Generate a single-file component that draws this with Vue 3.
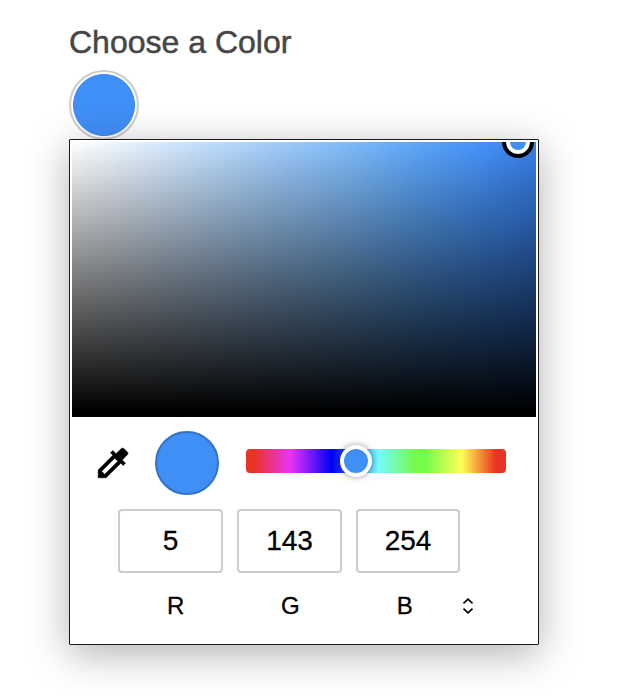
<script setup>
import { ref } from 'vue'

const channels = ref([
  { name: 'R', value: 5 },
  { name: 'G', value: 143 },
  { name: 'B', value: 254 },
])
</script>

<template>
  <main class="page">
    <div class="label">Choose a Color</div>
    <div class="swatch"></div>
    <section class="picker">
      <div class="field">
        <div class="field-thumb"></div>
      </div>
      <div class="controls">
        <svg class="dropper" viewBox="0 0 24 24">
          <path d="M20.900 5.700L18.300 3.100 17.200 3.100 13.840 6.410 11.910 4.500 10.500 5.910 11.920 7.330 3.100 16.150V20.900H7.850L16.670 12.080 18.090 13.500 19.500 12.090 17.580 10.170 20.900 6.800zM7 18.800L5.200 17 13.060 9.120 14.880 10.940z" />
        </svg>
        <div class="preview"></div>
        <div class="hue">
          <div class="hue-thumb"></div>
        </div>
      </div>
      <div class="inputs">
        <div v-for="c in channels" :key="c.name" class="input">{{ c.value }}</div>
      </div>
      <div class="names">
        <span v-for="c in channels" :key="c.name" class="name">{{ c.name }}</span>
        <svg class="arrows" viewBox="0 0 12 18">
          <path d="M1.500 6.300L6 2.200l4.500 4.100M1.500 11.700L6 15.800l4.500-4.100" />
        </svg>
      </div>
    </section>
  </main>
</template>

<style>
body {
  background: #fff;
}
</style>

<style scoped>
.page {
  box-sizing: border-box;
  width: 618px;
  height: 696px;
  padding: 24px 0 0 69px;
  overflow: hidden;
  font-family: "Liberation Sans", Arial, sans-serif;
}
.label {
  height: 46px;
  line-height: 36px;
  font-size: 32px;
  color: #464646;
  -webkit-text-stroke: 0.5px #464646;
  white-space: nowrap;
}
.swatch {
  box-sizing: border-box;
  width: 70px;
  height: 70px;
  border: 2px solid #ccc;
  border-radius: 50%;
  background: radial-gradient(circle, #408ff7 30.600px, #fff 31.400px);
}
.picker {
  position: relative;
  box-sizing: border-box;
  width: 470px;
  height: 506px;
  margin-top: -1px;
  padding: 2px;
  border: 1px solid #1c1c1e;
  border-radius: 1px;
  background: #fff;
  box-shadow: 0 9px 40px rgba(0, 0, 0, 0.31);
}
.field {
  position: relative;
  height: 275px;
  overflow: hidden;
  background:
    linear-gradient(to bottom, rgba(0, 0, 0, 0), rgba(0, 0, 0, 0.52) 50%, #000 98%),
    linear-gradient(to right, #fff 0%, #dbecfe 17%, #b3d7fc 35%, #80bcfa 59%, #5ba6fa 75%, #4591f8 89%, #377fea 100%);
}
.field-thumb {
  position: absolute;
  box-sizing: border-box;
  left: 430px;
  top: -16px;
  width: 32px;
  height: 32px;
  border: 4px solid #000;
  border-radius: 50%;
  background: #408ff7;
  box-shadow: inset 0 0 0 4px #fff;
}
.controls {
  display: flex;
  align-items: center;
  height: 64px;
  margin-top: 14px;
  padding-left: 21px;
}
.dropper {
  width: 40px;
  height: 40px;
  fill: #000;
  stroke: #000;
  stroke-width: 0.3;
}
.preview {
  box-sizing: border-box;
  width: 64px;
  height: 64px;
  margin-left: 22px;
  border: 2px solid #3372c5;
  border-radius: 50%;
  background: #408ff7;
}
.hue {
  position: relative;
  width: 260px;
  height: 24px;
  margin: 0 0 4px 27px;
  border-radius: 4px;
  background: linear-gradient(to right, #ea3323 3%, #ea33f7 17%, #0000f5 33%, #75fbfd 51%, #75fb4c 65%, #75fb4c 69%, #ffff54 83%, #ea3323 96%);
}
.hue-thumb {
  position: absolute;
  box-sizing: border-box;
  left: 94px;
  top: -4px;
  width: 32px;
  height: 32px;
  border: 4px solid #fff;
  border-radius: 50%;
  background: #408ff7;
  box-shadow: 0 0 6px rgba(0, 0, 0, 0.4);
}
.inputs {
  display: flex;
  gap: 14px;
  margin: 14px 0 0 46px;
}
.input {
  box-sizing: border-box;
  width: 105px;
  height: 64px;
  border: 2px solid #ccc;
  border-radius: 4px;
  font-size: 28px;
  line-height: 60px;
  text-align: center;
  color: #000;
  -webkit-text-stroke: 0.3px #000;
}
.input:last-child {
  width: 104px;
}
.names {
  display: flex;
  align-items: center;
  height: 28px;
  margin: 19px 0 0 46px;
  color: #000;
}
.name {
  width: 114.500px;
  padding-left: 1px;
  box-sizing: border-box;
  font-size: 24px;
  line-height: 28px;
  text-align: center;
  -webkit-text-stroke: 0.3px #000;
}
.arrows {
  width: 12px;
  height: 18px;
  fill: none;
  stroke: #000;
  stroke-width: 1.7;
}
</style>
